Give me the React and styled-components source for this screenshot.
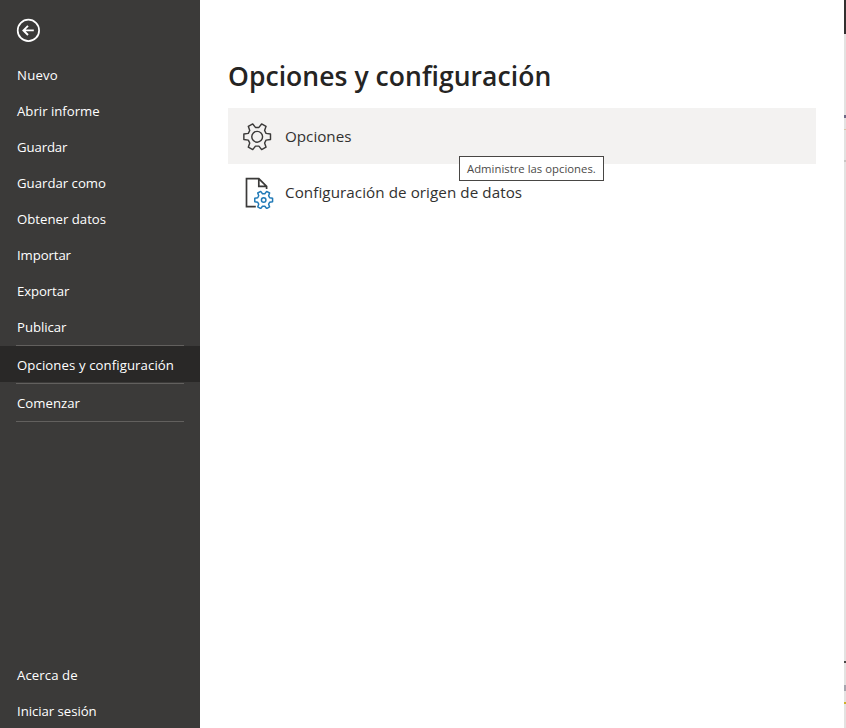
import React from "react";
import styled, { createGlobalStyle } from "styled-components";

const GlobalStyle = createGlobalStyle`
  * { box-sizing: border-box; }
  body { margin: 0; background: #fff; overflow: hidden; }
`;

const Shell = styled.div`
  display: flex;
  width: 846px;
  height: 728px;
  background: #fff;
  font-family: "Segoe UI", "Open Sans", "Noto Sans", sans-serif;
`;

const Sidebar = styled.nav`
  display: flex;
  flex-direction: column;
  width: 200px;
  background: #3b3a39;
`;

const BackButton = styled.button`
  display: flex;
  height: 56px;
  padding: 18px 16px 0;
  border: 0;
  background: none;
`;

const NavItem = styled.a`
  flex: none;
  height: 36px;
  padding-left: 17px;
  line-height: 38px;
  font-size: 13.2px;
  letter-spacing: ${(p) => p.$spacing || 0}px;
  white-space: nowrap;
  color: #fff;
  background: ${(p) => (p.$active ? "#292827" : "transparent")};
`;

const Divider = styled.hr`
  flex: none;
  width: 168px;
  height: 1px;
  margin: 1px 16px 0;
  border: 0;
  background: #62605e;
`;

const Spacer = styled.div`
  flex: 1;
`;

const Content = styled.main`
  flex: 1;
  padding: 54px 28px 0;
`;

const Title = styled.h1`
  height: 54px;
  margin: 0;
  font-size: 26.5px;
  font-weight: 550;
  line-height: 44px;
  letter-spacing: ${(p) => p.$spacing}px;
  white-space: nowrap;
  color: #252423;
`;

const OptionRow = styled.div`
  position: relative;
  display: flex;
  align-items: center;
  width: 588px;
  height: 56px;
  padding-left: 14px;
  gap: 11px;
  background: ${(p) => (p.$hovered ? "#f3f2f1" : "transparent")};
`;

const OptionLabel = styled.span`
  font-size: 15.2px;
  line-height: 20px;
  letter-spacing: ${(p) => p.$spacing}px;
  white-space: nowrap;
  color: #323130;
`;

const Tooltip = styled.div`
  position: absolute;
  z-index: 1;
  top: 48px;
  left: 231px;
  width: 145px;
  height: 25px;
  padding-left: 7px;
  border: 1px solid #484644;
  background: #fff;
  font-size: 11.3px;
  line-height: 24px;
  letter-spacing: ${(p) => p.$spacing}px;
  white-space: nowrap;
  color: #4c4a48;
`;

const Edge = styled.aside`
  display: flex;
  flex-direction: column;
  width: 2px;
  background: #e3e2e1;
`;

const EdgeMark = styled.i`
  flex: none;
  height: ${(p) => p.$h}px;
  margin-top: ${(p) => p.$gap || 0}px;
  background: ${(p) => p.$color};
`;

const BackIcon = () => (
  <svg width="25" height="25" viewBox="0 0 25 25" fill="none" stroke="#fff">
    <circle cx="12.4" cy="12.4" r="10.7" strokeWidth="1.7" />
    <path d="M17.8 12.4H7.5M12 7.8L7.4 12.4L12 17" strokeWidth="1.9" />
  </svg>
);

const GEAR =
  "M1.2 12.2V17.8L5.8 18.5L7.3 21.5L5.8 25.8L10.4 28.3L13.2 24.7H16.8L19.6 28.3L24.2 25.8L22.7 21.5L24.2 18.5L28.8 17.8V12.2L24.2 11.5L22.7 8.5L24.2 4.2L19.6 1.7L16.8 5.3H13.2L10.4 1.7L5.8 4.2L7.3 8.5L5.8 11.5Z";

const GearIcon = () => (
  <svg width="32" height="32" viewBox="0 0 32 32" fill="none" stroke="#3b3a39" strokeWidth="1.5" strokeLinejoin="round">
    <g transform="translate(.7 2.3) scale(.965)">
      <path d={GEAR} />
      <circle cx="15" cy="15" r="5.6" />
    </g>
  </svg>
);

const SourceIcon = () => (
  <svg width="32" height="34" viewBox="0 0 32 34" fill="none">
    <path d="M13.8 31.6H4.5V3.6H16.8L24.6 11.4V14M16.8 3.6V11.4H24.6" stroke="#3b3a39" strokeWidth="1.7" />
    <g transform="translate(12 15.3) scale(.645)" stroke="#217ab7" strokeWidth="2.3" strokeLinejoin="round">
      <path d={GEAR} fill="#fff" />
      <circle cx="15" cy="15" r="3.5" />
    </g>
  </svg>
);

const MAIN_ITEMS = [
  ["Nuevo", 0.2],
  ["Abrir informe", 0],
  ["Guardar", -0.12],
  ["Guardar como", 0],
  ["Obtener datos", 0],
  ["Importar", -0.1],
  ["Exportar", -0.1],
  ["Publicar", -0.05],
];

export default function App() {
  return (
    <>
      <GlobalStyle />
      <Shell>
        <Sidebar>
          <BackButton aria-label="Atrás"><BackIcon /></BackButton>
          {MAIN_ITEMS.map(([label, spacing]) => (
            <NavItem key={label} $spacing={spacing}>{label}</NavItem>
          ))}
          <Divider />
          <NavItem $active $spacing={0.09}>Opciones y configuración</NavItem>
          <Divider />
          <NavItem $spacing={0.02}>Comenzar</NavItem>
          <Divider />
          <Spacer />
          <NavItem $spacing={0.08}>Acerca de</NavItem>
          <NavItem $spacing={-0.04}>Iniciar sesión</NavItem>
        </Sidebar>
        <Content>
          <Title $spacing={0.05}>Opciones y configuración</Title>
          <OptionRow $hovered>
            <GearIcon />
            <OptionLabel $spacing={0}>Opciones</OptionLabel>
            <Tooltip $spacing={0.02}>Administre las opciones.</Tooltip>
          </OptionRow>
          <OptionRow>
            <SourceIcon />
            <OptionLabel $spacing={0.07}>Configuración de origen de datos</OptionLabel>
          </OptionRow>
        </Content>
        <Edge>
          <EdgeMark $h={34} $color="#323130" />
          <EdgeMark $gap={81} $h={3} $color="#6c6a86" />
          <EdgeMark $gap={11} $h={1} $color="#d9c3a8" />
          <EdgeMark $gap={30} $h={2} $color="#c8c6c4" />
          <EdgeMark $gap={499} $h={2} $color="#4a4948" />
          <EdgeMark $gap={22} $h={6} $color="#a5a5ae" />
          <EdgeMark $gap={11} $h={2} $color="#cdb02b" />
        </Edge>
      </Shell>
    </>
  );
}
